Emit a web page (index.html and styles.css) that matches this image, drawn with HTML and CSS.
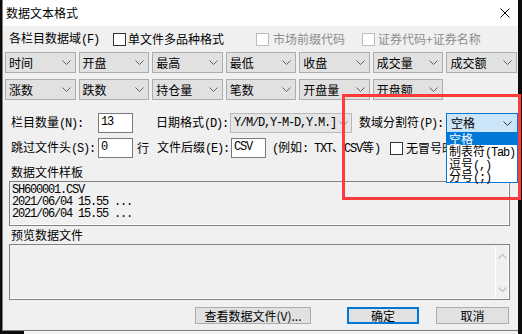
FILE: index.html
```html
<!DOCTYPE html>
<html lang="zh-CN">
<head>
  <meta charset="UTF-8">
  <title>数据文本格式</title>
  <link rel="stylesheet" href="styles.css">
</head>
<body>
<div class="desk">
  <div class="dialog">
    <!-- title bar -->
    <div class="titlebar">
      <span class="title">数据文本格式</span>
      <svg class="close" viewBox="0 0 10 10"><path d="M0.5 0.5L9.5 9.5M9.5 0.5L0.5 9.5"/></svg>
    </div>

    <!-- field options -->
    <div class="line opts">
      <span class="lbl-fields">各栏目数据域<span class="en">(F)</span></span>
      <span class="check chk-multi"></span>
      <span class="chk-text txt-multi">单文件多品种格式</span>
      <span class="check off chk-market"></span>
      <span class="chk-text off txt-market">市场前缀代码</span>
      <span class="check off chk-name"></span>
      <span class="chk-text off txt-name">证券代码+证券名称</span>
    </div>

    <!-- column combos -->
    <div class="combo-grid">
      <div class="combo"><span>时间</span><svg class="chev" viewBox="0 0 9 5"><path d="M0.5 0.5L4.5 4.5L8.5 0.5"/></svg></div>
      <div class="combo"><span>开盘</span><svg class="chev" viewBox="0 0 9 5"><path d="M0.5 0.5L4.5 4.5L8.5 0.5"/></svg></div>
      <div class="combo"><span>最高</span><svg class="chev" viewBox="0 0 9 5"><path d="M0.5 0.5L4.5 4.5L8.5 0.5"/></svg></div>
      <div class="combo"><span>最低</span><svg class="chev" viewBox="0 0 9 5"><path d="M0.5 0.5L4.5 4.5L8.5 0.5"/></svg></div>
      <div class="combo"><span>收盘</span><svg class="chev" viewBox="0 0 9 5"><path d="M0.5 0.5L4.5 4.5L8.5 0.5"/></svg></div>
      <div class="combo"><span>成交量</span><svg class="chev" viewBox="0 0 9 5"><path d="M0.5 0.5L4.5 4.5L8.5 0.5"/></svg></div>
      <div class="combo"><span>成交额</span><svg class="chev" viewBox="0 0 9 5"><path d="M0.5 0.5L4.5 4.5L8.5 0.5"/></svg></div>
      <div class="combo"><span>涨数</span><svg class="chev" viewBox="0 0 9 5"><path d="M0.5 0.5L4.5 4.5L8.5 0.5"/></svg></div>
      <div class="combo"><span>跌数</span><svg class="chev" viewBox="0 0 9 5"><path d="M0.5 0.5L4.5 4.5L8.5 0.5"/></svg></div>
      <div class="combo"><span>持仓量</span><svg class="chev" viewBox="0 0 9 5"><path d="M0.5 0.5L4.5 4.5L8.5 0.5"/></svg></div>
      <div class="combo"><span>笔数</span><svg class="chev" viewBox="0 0 9 5"><path d="M0.5 0.5L4.5 4.5L8.5 0.5"/></svg></div>
      <div class="combo"><span>开盘量</span><svg class="chev" viewBox="0 0 9 5"><path d="M0.5 0.5L4.5 4.5L8.5 0.5"/></svg></div>
      <div class="combo"><span>开盘额</span><svg class="chev" viewBox="0 0 9 5"><path d="M0.5 0.5L4.5 4.5L8.5 0.5"/></svg></div>
    </div>

    <!-- count / date / separator -->
    <div class="line row-a">
      <span class="lbl w87 ml8">栏目数量<span class="en">(N):</span></span>
      <span class="edit">13</span>
      <span class="lbl w74 ml23">日期格式<span class="en">(D):</span></span>
      <div class="combo date"><span class="en">Y/M/D,Y-M-D,Y.M.]</span><svg class="chev" viewBox="0 0 9 5"><path d="M0.5 0.5L4.5 4.5L8.5 0.5"/></svg></div>
      <span class="lbl w87 ml7">数域分割符<span class="en">(P):</span></span>
      <div class="combo focus"><span>空格</span><svg class="chev" viewBox="0 0 9 5"><path d="M0.5 0.5L4.5 4.5L8.5 0.5"/></svg></div>
    </div>

    <!-- skip / suffix -->
    <div class="line row-b">
      <span class="lbl w87 ml8">跳过文件头<span class="en">(S):</span></span>
      <span class="edit">0</span>
      <span class="lbl unit">行</span>
      <span class="lbl w74 ml8">文件后缀<span class="en">(E):</span></span>
      <span class="edit">CSV</span>
      <span class="lbl example"><span class="en">(</span>例如<span class="en">: TXT</span>、<span class="en">CSV</span>等<span class="en">)</span></span>
      <span class="check"></span>
      <span class="chk-text txt-colon">无冒号时间</span>
    </div>

    <div class="group-label first">数据文件样板</div>
    <div class="box sample">
      <div>SH600001.CSV</div>
      <div>2021/06/04 15.55 ...</div>
      <div>2021/06/04 15.55 ...</div>
    </div>

    <div class="group-label">预览数据文件</div>
    <div class="box preview">
      <div class="vscroll">
        <svg class="arrow" viewBox="0 0 9 5"><path d="M0.5 4.5L4.5 0.5L8.5 4.5"/></svg>
        <svg class="arrow" viewBox="0 0 9 5"><path d="M0.5 0.5L4.5 4.5L8.5 0.5"/></svg>
      </div>
    </div>

    <div class="line buttons">
      <span class="btn btn-view">查看数据文件(V)...</span>
      <span class="btn btn-ok">确定</span>
      <span class="btn btn-cancel">取消</span>
    </div>

    <!-- open dropdown of the separator combo -->
    <ul class="droplist">
      <li class="sel">空格</li>
      <li>制表符<span class="en">(Tab)</span></li>
      <li>逗号<span class="en">(,)</span></li>
      <li>分号<span class="en">(;)</span></li>
    </ul>
  </div>
  <div class="behind"></div>
  <div class="mark"></div>
</div>
</body>
</html>
```

FILE: styles.css
```css
* {
  box-sizing: border-box;
}
body {
  margin: 0;
  width: 522px;
  height: 334px;
  overflow: hidden;
  background: #0c0c0c;
  font-family: "Noto Sans CJK SC", sans-serif;
  font-size: 12px;
  color: #000;
}
.desk {
  position: relative;
  width: 522px;
  height: 334px;
}
.dialog {
  position: relative;
  margin-left: 2px;
  width: 516px;
  height: 331px;
  background: #f0f0f0;
  border-left: 1px solid #7f7f7f;
  border-bottom: 1px solid #7f7f7f;
  overflow: hidden;
}
.en {
  font-family: "Liberation Mono", monospace;
  font-size: 12px;
  letter-spacing: -1.2px;
}
.titlebar {
  height: 26px;
  background: #fff;
  display: flex;
  align-items: center;
  justify-content: space-between;
  padding-left: 3px;
}
.title {
  line-height: 16px;
}
.close {
  width: 10px;
  height: 10px;
  margin-right: 8px;
}
.close path {
  stroke: #000;
  stroke-width: 1;
  fill: none;
}
.line {
  display: flex;
  align-items: center;
  line-height: 16px;
  white-space: nowrap;
}
.opts {
  height: 26px;
}
.lbl-fields {
  margin-left: 6px;
  width: 90px;
}
.check {
  width: 13px;
  height: 13px;
  border: 1px solid #333;
  background: #fff;
  flex: none;
}
.check.off {
  border-color: #bcbcbc;
}
.chk-text.off {
  color: #8d8d8d;
}
.chk-multi {
  margin-left: 14px;
}
.txt-multi {
  margin-left: 2px;
  width: 96px;
}
.chk-market {
  margin-left: 32px;
}
.txt-market {
  margin-left: 4px;
  width: 72px;
}
.chk-name {
  margin-left: 17px;
}
.txt-name {
  margin-left: 3px;
}
.combo-grid {
  display: grid;
  grid-template-columns: repeat(7, 1fr);
  column-gap: 3px;
  row-gap: 6px;
  margin-left: 2px;
  width: 512px;
}
.combo {
  height: 21px;
  display: flex;
  align-items: center;
  justify-content: space-between;
  background: #e1e1e1;
  border: 1px solid #adadad;
  padding: 0 4px 0 3px;
  line-height: 16px;
  overflow: hidden;
}
.chev {
  width: 9px;
  height: 5px;
  flex: none;
}
.chev path {
  stroke: #606060;
  stroke-width: 1;
  fill: none;
}
.row-a {
  margin-top: 13px;
  height: 20px;
}
.row-b {
  margin-top: 5px;
  height: 20px;
}
.w87 {
  width: 87px;
}
.w74 {
  width: 74px;
}
.ml7 {
  margin-left: 7px;
}
.ml8 {
  margin-left: 8px;
}
.ml23 {
  margin-left: 23px;
}
.edit {
  width: 35px;
  height: 20px;
  background: #fff;
  border: 1px solid #7a7a7a;
  padding-left: 2px;
  font-family: "Liberation Mono", monospace;
  font-size: 12px;
  letter-spacing: -1.2px;
  line-height: 17px;
}
.combo.date {
  width: 122px;
  height: 20px;
  background: #e5e5e5;
  border-color: #b9b9b9;
  padding-right: 3px;
}
.combo.date .en {
  overflow: hidden;
  width: 108px;
}
.combo.date .chev path {
  stroke: #8a8a8a;
}
.combo.focus {
  width: 72px;
  height: 20px;
  background: #cce4f7;
  border-color: #0078d7;
  padding-right: 5px;
  padding-left: 4px;
}
.combo.focus .chev path {
  stroke: #333;
}
.unit {
  margin-left: 4px;
  width: 12px;
}
.example {
  margin-left: 6px;
  width: 118px;
}
.txt-colon {
  margin-left: 3px;
}
.group-label {
  height: 18px;
  line-height: 18px;
  padding-left: 8px;
}
.group-label.first {
  margin-top: 5px;
}
.box {
  margin-left: 6px;
  width: 501px;
  border: 1px solid #828282;
  box-shadow: inset -1px -1px 0 #fff;
  background: #f0f0f0;
}
.sample {
  height: 45px;
  padding: 2px 0 0 2px;
  font-family: "Liberation Mono", monospace;
  font-size: 12px;
  letter-spacing: -1.2px;
  line-height: 12px;
}
.preview {
  height: 56px;
  display: flex;
  justify-content: flex-end;
}
.vscroll {
  width: 13px;
  margin: 1px 1px 1px 0;
  border-left: 1px solid #fff;
  display: flex;
  flex-direction: column;
  justify-content: space-between;
  align-items: center;
  padding: 8px 0 6px;
}
.arrow {
  width: 9px;
  height: 5px;
}
.arrow path {
  stroke: #c6c6c6;
  stroke-width: 1.5;
  fill: none;
}
.buttons {
  margin-top: 7px;
  height: 17px;
}
.btn {
  height: 17px;
  display: flex;
  align-items: center;
  justify-content: center;
  background: #e1e1e1;
  border: 1px solid #adadad;
}
.btn-view {
  margin-left: 192px;
  width: 116px;
}
.btn-ok {
  margin-left: 36px;
  width: 72px;
  border: 2px solid #0078d7;
}
.btn-cancel {
  margin-left: 17px;
  width: 73px;
}
.droplist {
  position: absolute;
  left: 443px;
  top: 132px;
  width: 72px;
  height: 51px;
  margin: 0;
  padding: 0;
  list-style: none;
  background: #fff;
  border: 1px solid #0078d7;
}
.droplist li {
  height: 12.4px;
  line-height: 12px;
  padding-left: 2px;
  white-space: nowrap;
}
.droplist li.sel {
  background: #0078d7;
  color: #fff;
}
.behind {
  margin-left: 24px;
  width: 494px;
  height: 3px;
  background: #f4f4f4;
}
.mark {
  position: absolute;
  left: 342px;
  top: 94px;
  width: 179px;
  height: 106px;
  border: 3px solid #ff3b3b;
}
```
